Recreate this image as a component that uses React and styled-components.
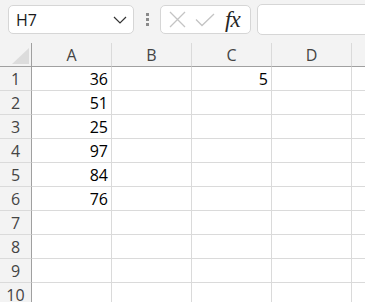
import React from 'react';
import styled, {createGlobalStyle} from 'styled-components';

const GlobalStyle = createGlobalStyle`
  html, body {
    margin: 0;
    padding: 0;
    background: #f3f3f3;
    overflow: hidden;
  }
`;

const Sheet = styled.div`
  width: 365px;
  height: 302px;
  overflow: hidden;
  background: #f3f3f3;
  font-family: "Open Sans", "Noto Sans", sans-serif;
`;

const Toolbar = styled.div`
  display: flex;
  align-items: center;
  height: 43px;
  padding: 0 0 4px 8px;
  box-sizing: border-box;
`;

const NameBox = styled.div`
  display: flex;
  align-items: center;
  justify-content: space-between;
  width: 126px;
  height: 29px;
  box-sizing: border-box;
  padding: 0 6px 0 7px;
  background: #fff;
  border: 1px solid #d6d6d6;
  border-radius: 5px;
  font-size: 16px;
  color: #1a1a1a;
`;

const Grip = styled.div`
  display: flex;
  flex-direction: column;
  gap: 2px;
  margin: 0 11px 0 12px;

  span {
    width: 3px;
    height: 3px;
    background: #8a8a8a;
  }
`;

const FormulaButtons = styled.div`
  display: flex;
  align-items: center;
  width: 91px;
  height: 29px;
  box-sizing: border-box;
  padding: 0 4px 0 8px;
  gap: 9px;
  background: #fff;
  border: 1px solid #d6d6d6;
  border-radius: 5px;
`;

const Fx = styled.span`
  font-family: "Liberation Serif", "DejaVu Serif", serif;
  font-style: italic;
  font-size: 23px;
  line-height: 1;
  color: #262626;
  margin-left: 1px;
  letter-spacing: -1px;
`;

const FormulaInput = styled.div`
  flex: 1;
  height: 29px;
  margin-left: 6px;
  margin-right: -10px;
  background: #fff;
  border: 1px solid #d6d6d6;
  border-radius: 5px;
`;

const Grid = styled.div`
  display: grid;
  grid-template-columns: 32px repeat(5, 80px);
  grid-auto-rows: 24px;
`;

const Corner = styled.div`
  position: relative;
  border-right: 1px solid #a0a0a0;
  border-bottom: 1px solid #a0a0a0;

  &::after {
    content: "";
    position: absolute;
    right: 2px;
    bottom: 2px;
    width: 17px;
    height: 16px;
    background: #dcdcdc;
    clip-path: polygon(100% 0, 100% 100%, 0 100%);
  }
`;

const ColHead = styled.div`
  display: flex;
  align-items: center;
  justify-content: center;
  border-right: 1px solid #dadada;
  border-bottom: 1px solid #a0a0a0;
  font-size: 16px;
  color: #444;
`;

const RowHead = styled.div`
  display: flex;
  align-items: center;
  justify-content: center;
  border-right: 1px solid #a0a0a0;
  border-bottom: 1px solid #dadada;
  font-size: 16px;
  color: #444;
`;

const Cell = styled.div`
  display: flex;
  align-items: center;
  justify-content: flex-end;
  padding-right: 3px;
  background: #fff;
  border-right: 1px solid #dadada;
  border-bottom: 1px solid #dadada;
  font-size: 16px;
  color: #000;
`;

const columns = ['A', 'B', 'C', 'D', ''];
const data = {
    1: {A: 36, C: 5},
    2: {A: 51},
    3: {A: 25},
    4: {A: 97},
    5: {A: 84},
    6: {A: 76},
};

function Chevron() {
    return (
        <svg width="14" height="8" viewBox="0 0 14 8" fill="none">
            <path d="M1 1l6 6 6-6" stroke="#333" strokeWidth="1.2"/>
        </svg>
    );
}

function Cross() {
    return (
        <svg width="17" height="17" viewBox="0 0 17 17" fill="none">
            <path d="M1 1l15 15M16 1L1 16" stroke="#c4c4c4" strokeWidth="1.3"/>
        </svg>
    );
}

function Check() {
    return (
        <svg width="20" height="14" viewBox="0 0 20 14" fill="none">
            <path d="M1 6.5l6 6L19 1" stroke="#c4c4c4" strokeWidth="1.3"/>
        </svg>
    );
}

export default function App() {
    const rows = Array.from({length: 10}, (_, i) => i + 1);

    return (
        <Sheet>
            <GlobalStyle/>
            <Toolbar>
                <NameBox>
                    <span>H7</span>
                    <Chevron/>
                </NameBox>
                <Grip><span/><span/><span/></Grip>
                <FormulaButtons>
                    <Cross/>
                    <Check/>
                    <Fx>fx</Fx>
                </FormulaButtons>
                <FormulaInput/>
            </Toolbar>
            <Grid>
                <Corner/>
                {columns.map((c, i) => <ColHead key={i}>{c}</ColHead>)}
                {rows.map(r => (
                    <React.Fragment key={r}>
                        <RowHead>{r}</RowHead>
                        {columns.map((c, i) => (
                            <Cell key={i}>{data[r] && data[r][c]}</Cell>
                        ))}
                    </React.Fragment>
                ))}
            </Grid>
        </Sheet>
    );
}
